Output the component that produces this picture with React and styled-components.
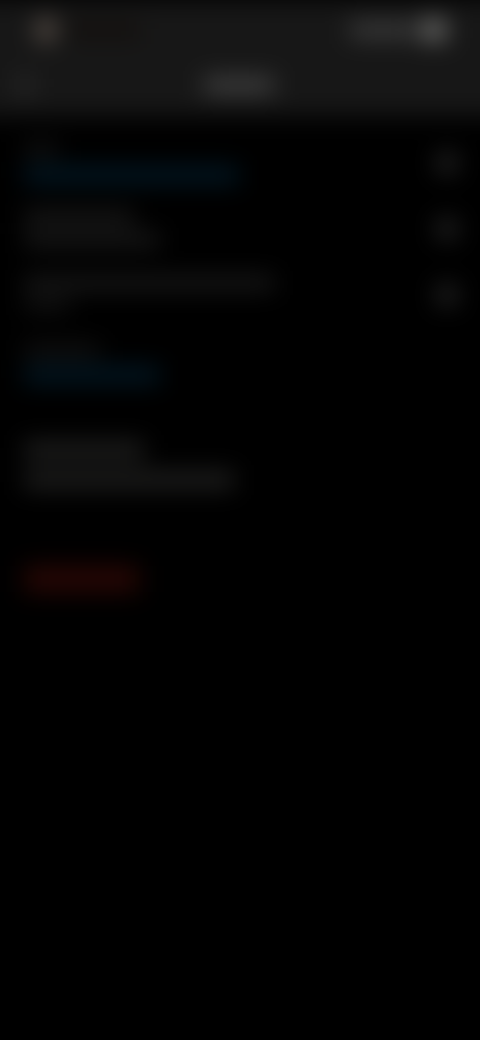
import React from "react";
import styled, { createGlobalStyle } from "styled-components";

const GlobalStyle = createGlobalStyle`
  html, body {
    margin: 0;
    height: 100%;
    background: #000;
    overflow: hidden;
  }
`;

const tones = {
  white: "#424242",
  bright: "#747472",
  grey: "#1f1f1f",
  soft: "#232322",
  faint: "#191919",
  blue: "#021a28",
  red: "#280704",
  brown: "#120e0b",
  logo: "#62574f",
  icon: "#272727",
};

const Blurred = styled.div`
  margin: -24px;
  padding: 24px 0 0;
  width: 528px;
  height: 1088px;
  background: #000;
  filter: blur(12px);
`;

const Header = styled.header`
  background: #171717;
  height: 116px;
  padding: 0 24px;
  display: flex;
  flex-direction: column;
`;

const TopBar = styled.div`
  height: 60px;
  padding: 0 34px 0 36px;
  display: flex;
  align-items: center;
  justify-content: space-between;
`;

const Brand = styled.div`
  display: flex;
  align-items: center;
  gap: 12px;
`;

const LogoMark = styled.div`
  width: 20px;
  height: 24px;
  border-radius: 50%;
  background: ${tones.logo};
`;

const Account = styled.div`
  display: flex;
  align-items: center;
  gap: 6px;
`;

const NavBar = styled.div`
  flex: 1;
  padding: 0 0 6px 18px;
  display: flex;
  align-items: center;
`;

const BackIcon = styled.div`
  width: 14px;
  height: 18px;
  background: #2c2c2c;
`;

const Title = styled.div`
  margin-left: 172px;
  width: 70px;
  height: 14px;
  background: #484848;
`;

const Content = styled.main`
  padding: 28px 24px 0 48px;
  display: flex;
  flex-direction: column;
`;

const Section = styled.section`
  padding-right: 22px;
  display: flex;
  justify-content: space-between;
`;

const Stack = styled.div`
  display: flex;
  flex-direction: column;
`;

const Group = styled.div`
  display: flex;
  flex-direction: column;
  margin-top: ${(p) => p.$top || 0}px;
`;

const Line = styled.div`
  width: ${(p) => p.$w}px;
  height: ${(p) => p.$h || 14}px;
  margin-top: ${(p) => p.$top || 0}px;
  background: ${(p) => tones[p.$tone]};
`;

const Controls = styled.div`
  padding-top: 8px;
  display: flex;
  flex-direction: column;
  gap: 44px;
`;

const Control = styled.div`
  width: 22px;
  height: 22px;
  border-radius: 50%;
  background: ${tones.icon};
`;

const DangerButton = styled.div`
  margin-top: 78px;
  width: 115px;
  height: 26px;
  background: ${tones.red};
`;

export default function App() {
  return (
    <>
      <GlobalStyle />
      <Blurred>
        <Header>
          <TopBar>
            <Brand>
              <LogoMark />
              <Line $w={72} $h={14} $tone="brown" />
            </Brand>
            <Account>
              <Line $w={66} $tone="white" />
              <Line $w={24} $h={20} $tone="bright" />
            </Account>
          </TopBar>
          <NavBar>
            <BackIcon />
            <Title />
          </NavBar>
        </Header>
        <Content>
          <Section>
            <Stack>
              <Line $w={34} $h={10} $tone="faint" />
              <Line $w={215} $h={16} $top={13} $tone="blue" />
              <Line $w={110} $h={12} $top={28} $tone="grey" />
              <Line $w={136} $h={12} $top={11} $tone="grey" />
              <Line $w={250} $h={12} $top={31} $tone="grey" />
              <Line $w={46} $h={10} $top={11} $tone="faint" />
            </Stack>
            <Controls>
              <Control />
              <Control />
              <Control />
            </Controls>
          </Section>
          <Group $top={35}>
            <Line $w={76} $h={10} $tone="faint" />
            <Line $w={136} $h={16} $top={12} $tone="blue" />
            <Line $w={120} $h={16} $top={59} $tone="soft" />
            <Line $w={210} $h={16} $top={14} $tone="soft" />
          </Group>
          <DangerButton />
        </Content>
      </Blurred>
    </>
  );
}
